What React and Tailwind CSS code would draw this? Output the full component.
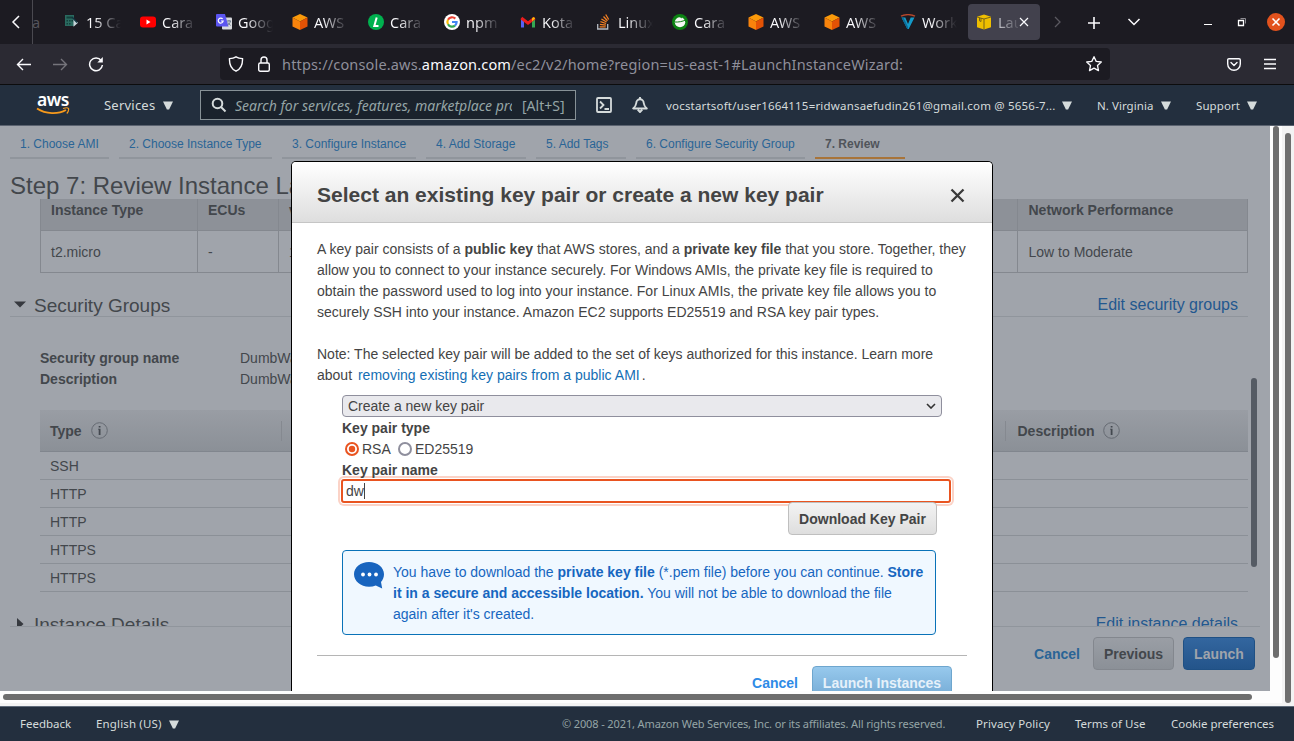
import React from "react";

const UI = "font-['Noto_Sans',sans-serif]";

function Cube() {
  return (
    <svg width="16" height="16" viewBox="0 0 16 16">
      <path d="M8 0 15.5 3.4 8 7.4.5 3.4Z" fill="#fb9a0a" />
      <path d="M.5 3.4 8 7.4V16L.5 12.4Z" fill="#f8830c" />
      <path d="M15.5 3.4 8 7.4V16l7.5-3.6Z" fill="#e35205" />
    </svg>
  );
}

const favicons = {
  calc: (
    <svg width="16" height="16" viewBox="0 0 16 16">
      <path d="M1 1h9v11H1z" fill="#2a6a60" />
      <path d="M2.500 2.500h6v2h-6zM2.500 6H4v1.500H2.500zM5 6h1.500v1.500H5zM7.500 6H9v1.500H7.500zM2.500 9H4v1.500H2.500zM5 9h1.500v1.500H5z" fill="#14403b" />
      <path d="m9.500 4.500 4.500 4.300-4.500 4Z" fill="#c9d6dc" />
      <path d="m8 3 5 5.500" stroke="#11343f" strokeWidth="1.500" />
    </svg>
  ),
  youtube: (
    <svg width="16" height="16" viewBox="0 0 16 16">
      <rect x="0" y="2.500" width="16" height="11" rx="3" fill="#f00" />
      <path d="M6.500 5.600v4.800L10.500 8Z" fill="#fff" />
    </svg>
  ),
  translate: (
    <svg width="16" height="16" viewBox="0 0 16 16">
      <rect x="6" y="3.500" width="10" height="12" rx="1" fill="#d8dade" />
      <path d="M1 0h8l3.500 12.500H1a1 1 0 0 1-1-1V1a1 1 0 0 1 1-1Z" fill="#5b55f0" />
      <path d="M6.700 5A2.500 2.500 0 1 0 7.200 7H5" fill="none" stroke="#fff" strokeWidth="1.200" />
      <path d="M11 7h4M13 6v1M14.500 7c-.5 2.500-2 3.500-3 4M12 8.500l2.500 3" fill="none" stroke="#6b7a8c" />
    </svg>
  ),
  aws: <Cube />,
  green: (
    <svg width="16" height="16" viewBox="0 0 16 16">
      <circle cx="8" cy="8" r="8" fill="#00b14f" />
      <path d="M8.700 3.500 6.300 12h4.200" fill="none" stroke="#fff" strokeWidth="2" />
    </svg>
  ),
  google: (
    <svg width="16" height="16" viewBox="0 0 16 16">
      <circle cx="8" cy="8" r="8" fill="#fff" />
      <g fill="none" strokeWidth="2.200">
        <path d="M11.300 4.600A4.600 4.600 0 0 0 4 5.700" stroke="#ea4335" />
        <path d="M4 5.700a4.600 4.600 0 0 0 0 4.600" stroke="#fbbc05" />
        <path d="M4 10.300a4.600 4.600 0 0 0 7 1.300" stroke="#34a853" />
        <path d="M11 11.600A4.600 4.600 0 0 0 12.600 8H8" stroke="#4285f4" />
      </g>
    </svg>
  ),
  gmail: (
    <svg width="16" height="16" viewBox="0 0 16 16">
      <path d="M1 4v9.500h3V6.500Z" fill="#5661f6" />
      <path d="M15 4v9.500h-3V6.500Z" fill="#34a853" />
      <path d="M1.300 4 8 9.200 14.700 4" fill="none" stroke="#ea1c1c" strokeWidth="3" />
      <path d="M12 7.300V4.500c1-2 3-1.500 3 .300Z" fill="#fbbc05" />
    </svg>
  ),
  stack: (
    <svg width="16" height="16" viewBox="0 0 16 16">
      <path d="M1.700 10v5h10v-5" fill="none" stroke="#b5bbc2" strokeWidth="1.300" />
      <path d="M3.700 12.800h6M3.900 10.300l6 .800M4.400 7.700l5.700 1.800M5.400 5l5.200 3M7.500 2.500l4 4.200M9.700.500l3 5" stroke="#f48024" strokeWidth="1.300" />
    </svg>
  ),
  leaf: (
    <svg width="16" height="16" viewBox="0 0 16 16">
      <circle cx="8" cy="8" r="8" fill="#0b8212" />
      <ellipse cx="8" cy="8.200" rx="5.200" ry="5" fill="#f4f8f4" />
      <path d="M2.500 8c4 .300 8-.500 11-2M7 2l3 2" fill="none" stroke="#0b8212" strokeWidth="1" />
    </svg>
  ),
  vue: (
    <svg width="16" height="16" viewBox="0 0 16 16">
      <path d="M1 2.200C5 .200 11 .200 15 2.200" fill="none" stroke="#b5472b" strokeWidth="1.500" />
      <path d="M1.500 3.500h3.800L8 10l2.700-6.500h3.800L8.700 15H7.300Z" fill="#149ac8" />
      <path d="M1.500 3.500h2L8 13v2h-.700Z" fill="#0b6b96" />
    </svg>
  ),
};

const tabs = [
  ["calc", "15 Ca"], ["youtube", "Cara"], ["translate", "Goog"], ["aws", "AWS"],
  ["green", "Cara"], ["google", "npm"], ["gmail", "Kota"], ["stack", "Linux"],
  ["leaf", "Cara"], ["aws", "AWS"], ["aws", "AWS"], ["vue", "Work"],
];

function TabStrip() {
  return (
    <div className={`flex h-11 items-center bg-[#1c1b22] text-[14.5px] text-[#fbfbfe] ${UI}`}>
      <div className="flex h-full w-[33px] shrink-0 items-center justify-center border-r border-[#4a4950]">
        <svg width="16" height="16" viewBox="0 0 16 16" fill="none" stroke="#fbfbfe" strokeWidth="1.500"><path d="M11 2 5 8l6 6" /></svg>
      </div>
      <div className="-ml-px w-6 shrink-0 pt-px text-[#55545b]">a</div>
      {tabs.map(([icon, label], i) => (
        <div key={i} className="flex w-[76px] shrink-0 items-center gap-[6px] pl-2">
          {favicons[icon]}
          <span className="w-[35px] overflow-hidden whitespace-nowrap bg-linear-to-r from-[#fbfbfe] from-25% to-[#1c1b22] bg-clip-text pt-px text-transparent">{label}</span>
        </div>
      ))}
      <div className="flex h-9 w-[72px] shrink-0 items-center rounded bg-[#42414d] pl-2">
        <svg width="16" height="16" viewBox="0 0 16 16" className="shrink-0">
          <path d="M8 .500 15 2.700v10.600l-7 2.200-7-2.200V2.700Z" fill="#efbf00" />
          <path d="M1 3l7 2 7-2M8 5v10.500M3.500 3.800v3l1.500.700V4" fill="none" stroke="#6b5a1c" strokeWidth=".9" />
        </svg>
        <span className="ml-[6px] w-5 overflow-hidden whitespace-nowrap bg-linear-to-r from-[#c8c8ce] to-[#55545f] bg-clip-text pt-px text-transparent">Lau</span>
        <svg width="10" height="10" viewBox="0 0 10 10" stroke="#fbfbfe" strokeWidth="1.200" className="ml-px"><path d="m1 1 8 8M9 1 1 9" /></svg>
      </div>
      <svg width="16" height="16" viewBox="0 0 16 16" fill="none" stroke="#5a5960" strokeWidth="1.300" className="ml-[9px] shrink-0"><path d="m6 3 5 5-5 5" /></svg>
      <svg width="14" height="14" viewBox="0 0 14 14" stroke="#fbfbfe" strokeWidth="1.600" className="ml-[22px] mt-px shrink-0"><path d="M1 7h12M7 1v12" /></svg>
      <svg width="14" height="14" viewBox="0 0 14 14" fill="none" stroke="#fbfbfe" strokeWidth="1.500" className="ml-[26px] shrink-0"><path d="m1.500 4 5.500 5.500L12.500 4" /></svg>
      <div className="ml-[63px] mt-[5px] h-px w-2 bg-white" />
      <svg width="10" height="10" viewBox="0 0 10 10" fill="none" className="ml-[25px]"><path d="M3.500 1.500H8.500V6.500" stroke="#8e8d93" /><path d="M1.500 3.500h5v5h-5z" stroke="#fff" strokeWidth="1.300" /></svg>
      <svg width="18" height="18" viewBox="0 0 18 18" className="ml-[20px]"><circle cx="9" cy="9" r="9" fill="#e2521d" /><path d="m5.500 5.500 7 7M12.500 5.500l-7 7" stroke="#fff" strokeWidth="1.600" /></svg>
    </div>
  );
}

function NavBar() {
  return (
    <div className="flex h-[41px] items-center border-b border-[#0c0c0d] bg-[#2b2a33]">
      <svg width="16" height="16" viewBox="0 0 16 16" fill="none" stroke="#fbfbfe" strokeWidth="1.400" className="ml-4"><path d="M15 8.500H1.500M7 3 1.500 8.500 7 14" /></svg>
      <svg width="16" height="16" viewBox="0 0 16 16" fill="none" stroke="#75747b" strokeWidth="1.400" className="ml-5"><path d="M1 8.500h13.500M9 3l5.500 5.500L9 14" /></svg>
      <svg width="16" height="16" viewBox="0 0 16 16" fill="none" stroke="#fbfbfe" strokeWidth="1.500" className="ml-5"><path d="M13.200 4.500A6.400 6.400 0 1 0 14.400 9" /><path d="M14.800 1v5.500H9.300Z" fill="#fbfbfe" stroke="none" /></svg>
      <div className={`ml-[116px] flex h-8 w-[890px] items-center rounded bg-[#1c1b22] pl-2 ${UI}`}>
        <svg width="16" height="16" viewBox="0 0 16 16" fill="none" stroke="#fbfbfe" strokeWidth="1.400"><path d="M8 .800c2 1.300 4 1.700 6.500 1.800.300 6-1.500 10.400-6.500 12.600C3 13 1.200 8.600 1.500 2.600 4 2.500 6 2.100 8 .800Z" /></svg>
        <svg width="12" height="16" viewBox="0 0 12 16" fill="none" stroke="#fbfbfe" strokeWidth="1.400" className="ml-[14px]"><rect x=".700" y="7" width="10.600" height="8.200" rx="1.500" /><path d="M3 7V4a3 3 0 0 1 6 0v3" /></svg>
        <span className="ml-[12px] mt-[2px] whitespace-nowrap text-[14.5px] tracking-[0.165px] text-[#8f8f9b]">https://console.aws.<span className="text-[#fbfbfe]">amazon.com</span>/ec2/v2/home?region=us-east-1#LaunchInstanceWizard:</span>
        <svg width="18" height="18" viewBox="0 0 18 18" fill="none" stroke="#fbfbfe" strokeWidth="1.300" strokeLinejoin="round" className="ml-auto mr-[7px]"><path d="m9 1.700 2.200 4.700 5.100.600-3.800 3.500 1 5.100L9 13.100l-4.500 2.500 1-5.100L1.700 7l5.100-.600Z" /></svg>
      </div>
      <svg width="14" height="13" viewBox="0 0 14 13" fill="none" stroke="#fbfbfe" strokeWidth="1.400" strokeLinecap="round" strokeLinejoin="round" className="ml-[117px]"><path d="M2 .700h10c.800 0 1.300.500 1.300 1.300v4a6.300 6.300 0 0 1-12.600 0V2C.700 1.200 1.200.700 2 .700Z" /><path d="m4 4.500 3 3 3-3" /></svg>
      <svg width="12" height="12" viewBox="0 0 12 12" stroke="#fbfbfe" strokeWidth="1.300" className="ml-[23px]"><path d="M0 1.500h12M0 6h12M0 10.500h12" /></svg>
    </div>
  );
}

function Caret() {
  return <svg width="10" height="9" viewBox="0 0 10 9" className="shrink-0"><path d="M0 .5h10L6.100 8.500H3.900Z" fill="#d5dbdb" /></svg>;
}

function AwsHeader() {
  return (
    <div className={`flex h-[41px] items-center border-b border-[#5b6370] bg-[#232f3e] text-[#d5dbdb] ${UI}`}>
      <div className="ml-9 flex w-[34px] flex-col items-center">
        <span className="text-[17.5px] font-semibold leading-[10px] tracking-[-0.4px] text-white">aws</span>
        <svg width="34" height="9" viewBox="0 0 34 9" className="mt-[3px]"><path d="M1 1.500c9 5.800 21 6 29 1.500" fill="none" stroke="#f79a1c" strokeWidth="1.900" /><path d="M27 1.500c2.500-.800 5-.800 5.500 0 .300 1-.400 3.500-1.700 5" fill="none" stroke="#f79a1c" strokeWidth="1.200" /></svg>
      </div>
      <span className="ml-[34px] mt-px w-[59px] text-[13px] tracking-[0.22px]">Services</span>
      <Caret />
      <div className="ml-[27px] flex h-[30px] w-[376px] shrink-0 items-center border border-[#879196] bg-[#1a222c] pl-[10px]">
        <svg width="16" height="16" viewBox="0 0 16 16" fill="none" stroke="#d5dbdb" strokeWidth="2" className="mr-2 shrink-0"><circle cx="6.500" cy="6.500" r="4.800" /><path d="m10 10 4.500 4.500" /></svg>
        <span className="mt-px w-[277px] shrink-0 overflow-hidden whitespace-nowrap text-[14px] italic text-[#95a5a6]">Search for services, features, marketplace products</span>
        <span className="ml-[10px] mt-px whitespace-nowrap text-[14px] text-[#95a5a6]">[Alt+S]</span>
      </div>
      <svg width="16" height="16" viewBox="0 0 16 16" fill="none" stroke="#d5dbdb" strokeWidth="1.800" className="ml-5 shrink-0"><rect x="1" y="1" width="14" height="14" rx="1" /><path d="M4 4.500 7.500 8 4 11.500M8.500 12H13" /></svg>
      <svg width="16" height="16" viewBox="0 0 16 16" fill="none" stroke="#d5dbdb" strokeWidth="1.900" strokeLinejoin="round" className="ml-5 shrink-0"><path d="M1.200 11.500h13.600C12.500 9.500 12 8.500 11.700 6a3.700 3.700 0 0 0-7.400 0C4 8.500 3.500 9.500 1.200 11.500Z" /><path d="M5.700 12.500 8 15l2.300-2.500M8 0v2" /></svg>
      <span className="ml-[18px] mt-px w-[396px] shrink-0 whitespace-nowrap text-[11.5px] tracking-[0.19px]">vocstartsoft/user1664115=ridwansaefudin261@gmail.com @ 5656-7...</span>
      <Caret />
      <span className="ml-[25px] mt-px w-[64px] whitespace-nowrap text-[11.5px] tracking-[0.05px]">N. Virginia</span>
      <Caret />
      <span className="ml-[25px] mt-px w-[51px] text-[11.5px] tracking-[0.1px]">Support</span>
      <Caret />
    </div>
  );
}

function Steps() {
  const base = "h-[33px] border-b-2 border-[#90959c] px-[10px] pt-[9px] text-[12px] leading-[19px] whitespace-nowrap shrink-0";
  return (
    <div className="flex gap-[10px] pl-[10px] text-[#2a6496]">
      <div className={`${base} w-[99px]`}>1. Choose AMI</div>
      <div className={`${base} w-[153px]`}>2. Choose Instance Type</div>
      <div className={`${base} w-[134px]`}>3. Configure Instance</div>
      <div className={`${base} w-[100px]`}>4. Add Storage</div>
      <div className={`${base} w-[90px]`}>5. Add Tags</div>
      <div className={`${base} w-[169px]`}>6. Configure Security Group</div>
      <div className="h-[33px] w-[90px] border-b-2 border-[#a8743a] px-[10px] pt-[9px] text-[12px] leading-[19px] font-bold text-[#50545a]">7. Review</div>
    </div>
  );
}

function Info() {
  return (
    <svg width="17" height="17" viewBox="0 0 17 17" className="ml-[9px]"><circle cx="8.500" cy="8.500" r="7.800" fill="none" stroke="#666b73" /><path d="M7 6.700h2.500v6.300h-1.800V7.500H7ZM7.700 4h1.800v1.600H7.700Z" fill="#43484f" /></svg>
  );
}

function Background() {
  return (
    <div className="flex h-[565px] w-[1270px] flex-col overflow-hidden bg-[#a0a4ab] text-[14px] text-[#43474c]">
      <Steps />
      <div className="h-10 pl-[10px] pt-[12px] text-[24px] leading-[30px]">Step 7: Review Instance Launch</div>
      <div className="flex h-[427px] justify-between overflow-hidden pl-[10px] pr-[13px]">
        <div className="w-[1238px]">
          <div className="ml-[30px] grid h-[74px] w-[1208px] grid-cols-[158px_81px_739px_230px] grid-rows-[32px_42px]">
            {["Instance Type", "ECUs", "vCPUs", "Network Performance"].map((t, i) => (
              <div key={t} className={`border-b border-r border-[#84888f] bg-[#8d9198] font-bold leading-[22px] ${i === 0 ? "border-l pl-[10px]" : i === 3 ? "pl-[10.5px]" : "pl-[10px]"}`}>{t}</div>
            ))}
            {["t2.micro", "-", "1", "Low to Moderate"].map((t, i) => (
              <div key={t} className={`border-b border-r border-[#84888f] leading-[42px] ${i === 0 ? "border-l pl-[10px]" : i === 3 ? "pl-[10.5px]" : "pl-[10px]"}`}>{t}</div>
            ))}
          </div>
          <div className="mt-[15px] flex h-[29px] items-center border-b border-[#90959c] pl-1">
            <svg width="12" height="7" viewBox="0 0 12 7" className="mt-[5px]"><path d="M0 .500h12L6 6.500Z" fill="#36393f" /></svg>
            <span className="ml-[8px] mt-[8px] text-[19px] leading-[22px]">Security Groups</span>
            <span className="ml-auto mr-[10px] mt-[5px] text-[16px] text-[#23588f]">Edit security groups</span>
          </div>
          <div className="ml-[30px] mt-[31px] grid grid-cols-[200px_auto] leading-[21px]">
            <b>Security group name</b><span>DumbWays</span>
            <b>Description</b><span>DumbWays</span>
          </div>
          <div className="ml-[30px] mt-[20px] flex h-[42px] items-center border-b border-[#81868e] bg-linear-to-b from-[#999da4] to-[#8b9097] pl-[10px] font-bold">
            <div className="flex h-5 w-[232px] items-center border-r border-[#858990]"><span className="mt-[2px]">Type</span><Info /></div>
            <div className="flex h-5 w-[724px] items-center border-r border-[#858990] pl-[10px]">Protocol</div>
            <div className="flex items-center pl-[11.5px]"><span className="-mr-px mt-[2px]">Description</span><Info /></div>
          </div>
          {["SSH", "HTTP", "HTTP", "HTTPS", "HTTPS"].map((t, i) => (
            <div key={i} className="ml-[30px] h-7 border-b border-[#8b9097] pl-[10px] leading-[28px]">{t}</div>
          ))}
          <div className="mt-[16px] flex h-[32px] items-center pl-[7px]">
            <svg width="7" height="12" viewBox="0 0 7 12" className="-mt-px"><path d="M0 0 6.500 6 0 12Z" fill="#36393f" /></svg>
            <span className="ml-[10px] mt-[2px] text-[19px] leading-[22px]">Instance Details</span>
            <span className="ml-auto mr-[10px] text-[16px] text-[#23588f]">Edit instance details</span>
          </div>
        </div>
        <div className="mt-[179px] h-[189px] w-[6px] rounded-full bg-[#555b64]" />
      </div>
      <div className="mx-[10px] flex h-[65px] justify-end border-t border-[#90959c] pr-[5px] pt-[10px] text-[14px] font-bold">
        <span className="mr-[13px] leading-[34px] text-[#2a6496]">Cancel</span>
        <div className="h-[33px] w-[81px] rounded border border-[#83878e] bg-linear-to-b from-[#9a9ea5] to-[#8b9097] text-center leading-[32px]">Previous</div>
        <div className="ml-[9px] h-[33px] w-[72px] rounded border border-[#1f5084] bg-linear-to-b from-[#33669f] to-[#23548a] text-center leading-[32px] text-[#a0a4ab]">Launch</div>
      </div>
    </div>
  );
}

function Modal() {
  return (
    <div className="absolute left-[291px] top-[161px] h-[530px] w-[702px] overflow-hidden rounded-t-[5px] border border-b-0 border-black bg-white text-[14px] leading-[21px] text-[#444]">
      <div className="flex h-[61px] items-center justify-between border-b border-[#c5c5c5] bg-linear-to-b from-white to-[#dedede] px-[25px]">
        <h2 className="mt-[4px] whitespace-nowrap text-[21px] font-bold">Select an existing key pair or create a new key pair</h2>
        <svg width="15" height="15" viewBox="0 0 15 15" stroke="#3a3a3a" strokeWidth="2.300" className="mr-[2px] mt-[7px]"><path d="m1.500 1.500 12 12M13.500 1.500l-12 12" /></svg>
      </div>
      <div className="px-[25px] pt-[16px]">
        <p className="tracking-[0.013px]">A key pair consists of a <b>public key</b> that AWS stores, and a <b>private key file</b> that you store. Together, they<br />allow you to connect to your instance securely. For Windows AMIs, the private key file is required to<br />obtain the password used to log into your instance. For Linux AMIs, the private key file allows you to<br />securely SSH into your instance. Amazon EC2 supports ED25519 and RSA key pair types.</p>
        <p className="mt-[21px]">Note: The selected key pair will be added to the set of keys authorized for this instance. Learn more<br />about <span className="ml-[2px] mr-[2px] tracking-[0.02px] text-[#146eb4]">removing existing key pairs from a public AMI</span>.</p>
        <div className="pl-[25px]">
          <div className="mt-[9px] flex h-[22px] w-[600px] items-center justify-between rounded border border-[#8f8f9d] bg-[#e9e9ed] pl-[5px] pr-[5px]">
            Create a new key pair
            <svg width="10" height="6" viewBox="0 0 10 6" fill="none" stroke="#333" strokeWidth="1.600"><path d="m1 1 4 4 4-4" /></svg>
          </div>
          <b className="mt-px block">Key pair type</b>
          <div className="flex items-center pl-[3px]">
            <svg width="14" height="14" viewBox="0 0 14 14" className="-mt-px"><circle cx="7" cy="7" r="6" fill="#fff" stroke="#e95420" strokeWidth="2" /><circle cx="7" cy="7" r="3.200" fill="#e95420" /></svg>
            <span className="ml-[3px] w-[36px]">RSA</span>
            <svg width="14" height="14" viewBox="0 0 14 14" className="-mt-px"><circle cx="7" cy="7" r="6" fill="#fff" stroke="#8f8f9d" strokeWidth="2" /></svg>
            <span className="ml-[3px]">ED25519</span>
          </div>
          <b className="block h-[19px]">Key pair name</b>
          <div className="-ml-px flex h-[24px] w-[610px] items-center rounded-[3px] border-2 border-[#e95420] bg-white pl-[3px] shadow-[0_0_0_1px_#fff,0_0_0_3px_#fbd3c7]">
            dw<span className="h-4 w-px bg-[#444]" />
          </div>
          <div className="relative -mt-px ml-[446px] h-[33px] w-[149px] rounded border border-[#bfbfbf] bg-linear-to-b from-[#f3f3f3] to-[#dedede] text-center font-bold leading-[32px]">Download Key Pair</div>
          <div className="mt-[15px] flex h-[85px] w-[594px] rounded border border-[#0972b8] bg-[#f0f8ff] pl-[11px] pt-[11px] text-[#1666c0]">
            <svg width="30" height="27" viewBox="0 0 30 27" className="mr-[9px] shrink-0"><path d="M15 0c8.300 0 15 5.400 15 12.300 0 3.200-1.300 5.800-3 7.700l1.200 6.500-6.400-3c-2 .800-4.300 1.200-6.800 1.200C6.700 24.700 0 19.200 0 12.300S6.700 0 15 0Z" fill="#1864be" /><g fill="#fff"><circle cx="9" cy="12.500" r="1.900" /><circle cx="15.500" cy="12.500" r="1.900" /><circle cx="22" cy="12.500" r="1.900" /></g></svg>
            <p className="whitespace-nowrap">You have to download the <b>private key file</b> (*.pem file) before you can continue. <b>Store<br />it in a secure and accessible location.</b> You will not be able to download the file<br />again after it's created.</p>
          </div>
        </div>
        <div className="mt-[20px] flex justify-end border-t border-[#b5b5b5] pr-[15px] pt-[10px] font-bold">
          <span className="mr-[14px] leading-[34px] text-[#2e8be6]">Cancel</span>
          <div className="h-[33px] w-[140px] rounded border border-[#6ea6ce] bg-linear-to-b from-[#97c9ed] to-[#74aad4] text-center leading-[33px] text-[#e6f1fa]">Launch Instances</div>
        </div>
      </div>
    </div>
  );
}

function Footer() {
  return (
    <div className={`flex h-[35px] items-center border-t border-[#5f6b7a] bg-[#232f3e] pl-5 text-[11.5px] whitespace-nowrap text-[#d5dbdb] ${UI}`}>
      <span className="w-[76px]">Feedback</span>
      <span className="w-[73px] tracking-[0.15px]">English (US)</span>
      <Caret />
      <span className="ml-[383px] w-[414px] text-[11px] tracking-[-0.12px] text-[#95a5a6]">© 2008 - 2021, Amazon Web Services, Inc. or its affiliates. All rights reserved.</span>
      <span className="w-[99px] tracking-[0.1px]">Privacy Policy</span>
      <span className="w-[96px]">Terms of Use</span>
      <span className="tracking-[-0.05px]">Cookie preferences</span>
    </div>
  );
}

export default function App() {
  return (
    <div className="relative h-[741px] w-[1294px] overflow-hidden bg-white font-['Liberation_Sans',Arial,sans-serif]">
      <TabStrip />
      <NavBar />
      <AwsHeader />
      <div className="flex h-[580px] bg-[#f3f3f3]">
        <div className="h-[577px] w-[1282px] bg-[#fdfdfd]">
          <div className="flex h-[565px]">
            <Background />
            <div className="ml-[3px] h-[532px] w-[6px] rounded-full bg-[#6e6e6e]" />
          </div>
          <div className="ml-[3px] mt-[3px] h-[6px] w-[1249px] rounded-full bg-[#6e6e6e]" />
        </div>
        <div className="ml-[3px] mt-[7px] h-[570px] w-[6px] rounded-full bg-[#6e6e6e]" />
      </div>
      <Footer />
      <Modal />
    </div>
  );
}
